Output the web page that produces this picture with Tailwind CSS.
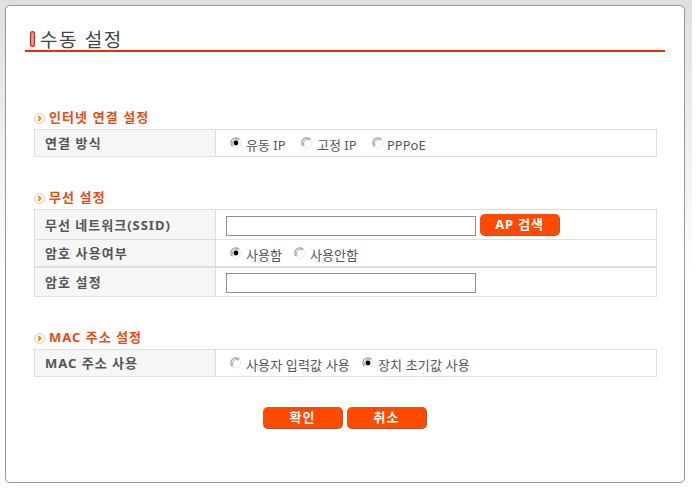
<!DOCTYPE html>
<html lang="ko">
<head>
    <meta charset="UTF-8">
    <script src="https://cdn.jsdelivr.net/npm/@tailwindcss/browser@4"></script>
    <title>수동 설정</title>
</head>
<body class="h-screen overflow-hidden bg-white font-['Noto_Sans','Noto_Sans_CJK_KR',sans-serif] text-[13px] text-[#555]">
    <svg class="hidden">
        <symbol id="bullet" viewBox="0 0 11 11">
            <circle cx="5.5" cy="5.5" r="4.9" fill="#fff" stroke="#c9c9c9" stroke-width="1"/>
            <path d="M3.6 2.8h1.6L8 5.5 5.2 8.2H3.6L4.6 5.5z" fill="#ff8a00"/>
        </symbol>
        <symbol id="radio" viewBox="0 0 12 12">
            <circle cx="6" cy="6" r="5" fill="#fff" stroke="#ece9e4" stroke-width="1"/>
            <path d="M2.4 9.4A5 5 0 0 1 9.4 2.2" fill="none" stroke="#8fa3b0" stroke-width="1.2"/>
            <path d="M3.2 8.7A4 4 0 0 1 8.7 3.1" fill="none" stroke="#b08f7a" stroke-width="0.8"/>
        </symbol>
        <symbol id="radio-on" viewBox="0 0 12 12">
            <use href="#radio"/>
            <circle cx="6" cy="6" r="2.4" fill="#000"/>
        </symbol>
    </svg>

    <div class="h-full w-[692px] bg-linear-to-b from-[#dfdfdf] to-white to-[280px] pt-[5px] pl-[5px]">
        <main class="h-[478px] w-[680px] rounded-[5px] border border-[#969696] bg-white px-[19px] pt-[20px]">
            <header class="flex h-[26px] items-center border-b-2 border-[#ff2600]">
                <svg class="mt-[2px] ml-[5px] h-[16px] w-[5px]" viewBox="0 0 5 16">
                    <rect x="0.6" y="0.6" width="3.8" height="14.8" rx="1.9" fill="#f3a08c" stroke="#cc201a" stroke-width="1.2"/>
                </svg>
                <h1 class="mt-1 ml-[5px] text-[19px] leading-6 tracking-[1.6px] whitespace-nowrap text-[#444]">수동 설정</h1>
            </header>

            <div class="ml-[9px] w-[623px]">
                <!-- Internet connection -->
                <section class="pt-[58px]">
                    <h2 class="flex h-[19px] items-start font-bold text-[#e84a12]">
                        <svg class="mt-[3px] h-[11px] w-[11px]"><use href="#bullet"/></svg>
                        <span class="ml-1 leading-[14px] tracking-[1.1px]">인터넷 연결 설정</span>
                    </h2>
                    <div class="flex h-[28px] border border-[#dedede]">
                        <div class="w-[181px] border-r border-[#dedede] bg-[#f6f6f6] pl-[10px] leading-[26px] font-bold tracking-[1.1px]">연결 방식</div>
                        <div class="flex items-center pl-[14px] leading-[22px]">
                            <svg class="h-3 w-3"><use href="#radio-on"/></svg>
                            <span class="ml-1 w-[55px] pt-1">유동 IP</span>
                            <svg class="h-3 w-3"><use href="#radio"/></svg>
                            <span class="ml-1 w-[55px] pt-1">고정 IP</span>
                            <svg class="h-3 w-3"><use href="#radio"/></svg>
                            <span class="ml-[3px] pt-1">PPPoE</span>
                        </div>
                    </div>
                </section>

                <!-- Wireless -->
                <section class="pt-[33px]">
                    <h2 class="flex h-[19px] items-start font-bold text-[#e84a12]">
                        <svg class="mt-[3px] h-[11px] w-[11px]"><use href="#bullet"/></svg>
                        <span class="ml-1 leading-[14px] tracking-[1.1px]">무선 설정</span>
                    </h2>
                    <div class="border border-[#dedede]">
                        <div class="flex h-[30px] border-b border-[#dedede]">
                            <div class="w-[181px] border-r border-[#dedede] bg-[#f6f6f6] pl-[10px] leading-[30px] font-bold tracking-[1px]">무선 네트워크(SSID)</div>
                            <div class="flex items-start pl-[10px]">
                                <input type="text" class="mt-[6px] h-5 w-[250px] border border-[#8e8e8e] bg-white">
                                <button class="mt-1 ml-1 h-[22px] w-20 rounded-[5px] border-r border-b border-[#a85a38] bg-[#ff4a00] pb-px leading-[18px] font-bold tracking-[0.8px] text-white">AP 검색</button>
                            </div>
                        </div>
                        <div class="flex h-[28px] border-b-2 border-[#dedede]">
                            <div class="w-[181px] border-r border-[#dedede] bg-[#f6f6f6] pl-[10px] leading-[26px] font-bold tracking-[1.1px]">암호 사용여부</div>
                            <div class="flex items-center pl-[14px] leading-[22px]">
                                <svg class="h-3 w-3"><use href="#radio-on"/></svg>
                                <span class="ml-1 w-[48px] pt-1">사용함</span>
                                <svg class="h-3 w-3"><use href="#radio"/></svg>
                                <span class="ml-1 pt-1">사용안함</span>
                            </div>
                        </div>
                        <div class="flex h-[28px]">
                            <div class="w-[181px] border-r border-[#dedede] bg-[#f6f6f6] pl-[10px] leading-[28px] font-bold tracking-[1.1px]">암호 설정</div>
                            <div class="pl-[10px]">
                                <input type="text" class="mt-[5px] block h-5 w-[250px] border border-[#8e8e8e] bg-white">
                            </div>
                        </div>
                    </div>
                </section>

                <!-- MAC address -->
                <section class="pt-[33px]">
                    <h2 class="flex h-[19px] items-start font-bold text-[#e84a12]">
                        <svg class="mt-[3px] h-[11px] w-[11px]"><use href="#bullet"/></svg>
                        <span class="ml-1 leading-[14px] tracking-[1px]">MAC 주소 설정</span>
                    </h2>
                    <div class="flex h-[28px] border border-[#dedede]">
                        <div class="w-[181px] border-r border-[#dedede] bg-[#f6f6f6] pl-[10px] leading-[26px] font-bold tracking-[1px]">MAC 주소 사용</div>
                        <div class="flex items-center pl-[14px] leading-[22px]">
                            <svg class="h-3 w-3"><use href="#radio"/></svg>
                            <span class="ml-1 w-[116px] pt-1 tracking-[0.15px] whitespace-nowrap">사용자 입력값 사용</span>
                            <svg class="h-3 w-3"><use href="#radio-on"/></svg>
                            <span class="ml-1 pt-1 tracking-[0.15px] whitespace-nowrap">장치 초기값 사용</span>
                        </div>
                    </div>
                </section>
            </div>

            <div class="mt-[30px] ml-[238px] flex gap-1">
                <button class="h-[22px] w-20 rounded-[5px] border-r border-b border-[#a85a38] bg-[#ff4a00] pb-px leading-[18px] font-bold tracking-[1px] text-white">확인</button>
                <button class="h-[22px] w-20 rounded-[5px] border-r border-b border-[#a85a38] bg-[#ff4a00] pb-px leading-[18px] font-bold tracking-[1px] text-white">취소</button>
            </div>
        </main>
    </div>
</body>
</html>
